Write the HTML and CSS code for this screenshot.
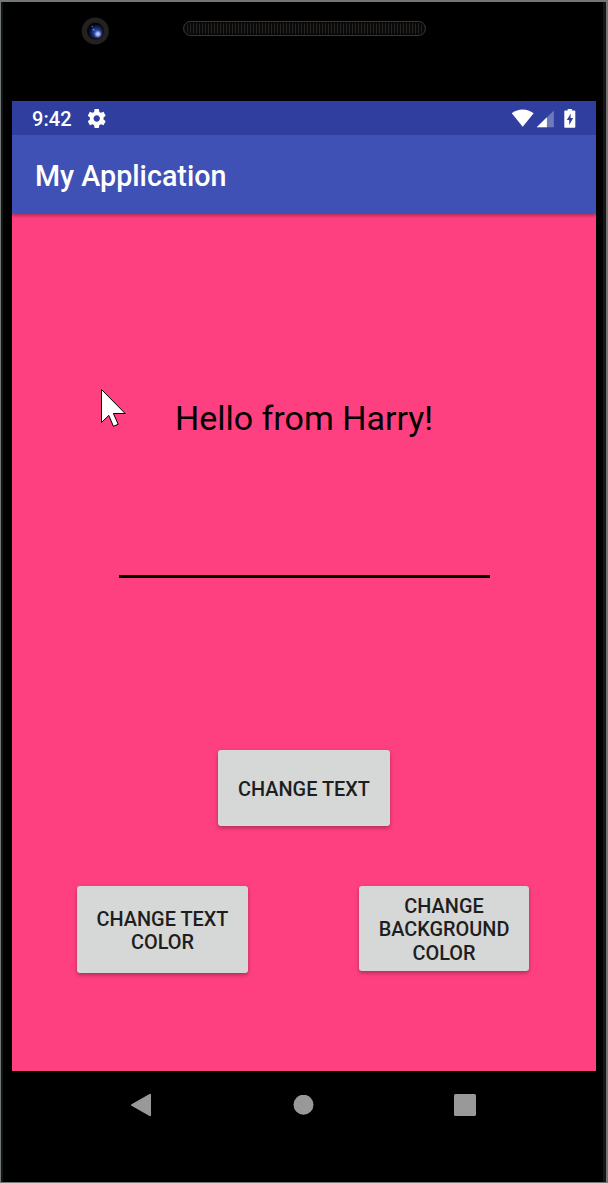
FILE: index.html
```html
<!DOCTYPE html>
<html lang="en">
<head>
<meta charset="utf-8">
<title>My Application</title>
<link rel="stylesheet" href="styles.css">
</head>
<body>
<div class="phone">
  <div class="bezel-top">
    <svg class="camera" width="28" height="28" viewBox="0 0 28 28">
      <defs>
        <radialGradient id="lens" cx="0.6" cy="0.6" r="0.55">
          <stop offset="0" stop-color="#4059b8"/>
          <stop offset="0.6" stop-color="#1a2a68"/>
          <stop offset="1" stop-color="#05070f"/>
        </radialGradient>
        <radialGradient id="glint">
          <stop offset="0" stop-color="#d5e0ff"/>
          <stop offset="0.45" stop-color="#8aa2ee"/>
          <stop offset="1" stop-color="#3c56b8" stop-opacity="0"/>
        </radialGradient>
      </defs>
      <circle cx="14.3" cy="14" r="13.6" fill="#232221"/>
      <circle cx="14.3" cy="14" r="8.4" fill="#080808"/>
      <circle cx="14.5" cy="14.2" r="7.4" fill="url(#lens)"/>
      <circle cx="16.9" cy="17" r="4.4" fill="url(#glint)"/>
      <circle cx="12.7" cy="12.7" r="1.3" fill="#4666d2"/>
      <circle cx="11.3" cy="9.5" r="0.7" fill="#5970c0"/>
    </svg>
    <div class="speaker"></div>
  </div>
  <main class="screen">
    <div class="status">
      <span class="clock">9:42</span>
      <svg class="gear" width="18" height="19" viewBox="2.4 2 19.8 20" preserveAspectRatio="none"><path fill="#fff" d="M19.43 12.98c.04-.32.07-.64.07-.98s-.03-.66-.07-.98l2.11-1.65c.19-.15.24-.42.12-.64l-2-3.46c-.12-.22-.39-.3-.61-.22l-2.49 1c-.52-.4-1.08-.73-1.69-.98l-.38-2.65C14.46 2.18 14.25 2 14 2h-4c-.25 0-.46.18-.49.42l-.38 2.65c-.61.25-1.17.59-1.69.98l-2.49-1c-.23-.09-.49 0-.61.22l-2 3.46c-.13.22-.07.49.12.64l2.11 1.65c-.04.32-.07.65-.07.98s.03.66.07.98l-2.11 1.65c-.19.15-.24.42-.12.64l2 3.46c.12.22.39.3.61.22l2.49-1c.52.4 1.08.73 1.69.98l.38 2.65c.03.24.24.42.49.42h4c.25 0 .46-.18.49-.42l.38-2.65c.61-.25 1.17-.59 1.69-.98l2.49 1c.23.09.49 0 .61-.22l2-3.46c.12-.22.07-.49-.12-.64l-2.11-1.65zM12 15.5c-1.93 0-3.5-1.57-3.5-3.5s1.57-3.5 3.5-3.5 3.5 1.57 3.5 3.5-1.57 3.5-3.5 3.5z"/></svg>
      <svg class="signals" width="66" height="20" viewBox="0 0 66 20">
        <path fill="#fff" d="M10.7 17.8 -0.2 4.2Q4.7 0.4 10.7 0.4T21.7 4.2Z"/>
        <path fill="#fff" fill-opacity=".3" d="M24.7 18.2 41.9 1.4V18.2Z"/>
        <path fill="#fff" d="M24.7 18.2 34.9 8.2V18.2Z"/>
        <path fill="#fff" fill-rule="evenodd" d="M55.7 0h4.2v1.5h2.6q.8 0 .8.8v15.6q0 .8-.8.8h-9.4q-.8 0-.8-.8V2.3q0-.8.8-.8h2.6ZM58.8 4.6 54.8 10.9h2.4v5.2l4-7h-2.7Z"/>
      </svg>
    </div>
    <header class="app-bar"><h1 class="title">My Application</h1></header>
    <section class="content">
      <p class="hello">Hello from Harry!</p>
      <div class="input-line"></div>
      <button class="btn btn-text">CHANGE TEXT</button>
      <div class="btn-row">
        <button class="btn btn-color">CHANGE TEXT<br>COLOR</button>
        <button class="btn btn-background">CHANGE<br>BACKGROUND<br>COLOR</button>
      </div>
      <svg class="pointer" width="27" height="40" viewBox="0 0 27 40"><path d="M1.5 1.5V34.5L8.8 27.4 13.4 38.3 18.2 36.3 13.4 25.5H25.2Z" fill="#fff" stroke="#000" stroke-width="1"/></svg>
    </section>
  </main>
  <nav class="nav">
    <svg width="22" height="24" viewBox="0 0 22 24"><path d="M2 12 20 1.8V22.2Z" fill="#999" stroke="#999" stroke-width="2" stroke-linejoin="round"/></svg>
    <svg width="22" height="20" viewBox="0 0 22 20"><circle cx="11.5" cy="9.7" r="10" fill="#999"/></svg>
    <svg width="22" height="22" viewBox="0 0 22 22"><rect width="22" height="22" rx="1.6" fill="#999"/></svg>
  </nav>
</div>
</body>
</html>
```
FILE: styles.css
```css
* { box-sizing: border-box; }
body { margin: 0; background: #000; font-family: Roboto, "Liberation Sans", sans-serif; }
.phone {
  width: 608px;
  height: 1183px;
  background: #000;
  border: solid #747675;
  border-width: 2px 2px 1px 1px;
  box-shadow: inset 2px 0 0 #101515, inset -3px 0 0 #151515;
  padding: 0 10px 0 11px;
}
.bezel-top { display: flex; height: 99px; padding: 15px 0 0 69px; gap: 74px; align-items: flex-start; }
.camera { display: block; }
.speaker {
  width: 243px;
  height: 15px;
  margin-top: 4px;
  border: 1px solid #383837;
  border-radius: 8px;
  background: repeating-linear-gradient(90deg, #28231f 0 1px, #0b0a0a 1px 3px);
  box-shadow: inset 0 0 2px 1px #050505;
}
.screen { width: 584px; height: 970px; background: #ff4080; }
.status { display: flex; align-items: flex-start; height: 34px; padding: 8px 18px 0 20px; background: #303f9f; color: #fff; }
.clock { font-size: 20px; font-weight: 500; line-height: 20px; width: 56px; letter-spacing: 0.1px; }
.gear { display: block; }
.signals { display: block; margin-left: auto; }
.app-bar {
  position: relative;
  display: flex;
  align-items: center;
  height: 79px;
  padding: 3px 23px 0;
  background: #3f51b5;
  color: #fff;
  box-shadow: 0 2px 3px rgba(0, 0, 0, 0.3);
}
.title { margin: 0; font-size: 28.7px; font-weight: 500; line-height: 34px; }
.content { position: relative; height: 857px; display: flex; flex-direction: column; align-items: center; padding-top: 184px; }
.hello { margin: 0; font-size: 34px; line-height: 40px; color: #000; white-space: nowrap; }
.input-line { width: 371px; height: 3px; margin-top: 137px; background: #000; }
.btn {
  border: 0;
  padding: 3px 0 0;
  border-radius: 3px;
  background: #d6d7d7;
  color: #1e1e1e;
  font: 500 19.9px/23.3px Roboto, "Liberation Sans", sans-serif;
  box-shadow: 0 2px 4px rgba(0, 0, 0, 0.32);
}
.btn-text { width: 172px; height: 76px; margin-top: 172px; }
.btn-row { display: flex; align-self: stretch; align-items: flex-start; justify-content: space-between; margin-top: 60px; padding: 0 67px 0 65px; }
.btn-color { width: 171px; height: 87.4px; }
.btn-background { width: 170px; height: 85px; }
.pointer { position: absolute; left: 88px; top: 174px; }
.nav { display: flex; justify-content: space-between; align-items: center; height: 68px; padding: 0 120px 0 118px; }
```
